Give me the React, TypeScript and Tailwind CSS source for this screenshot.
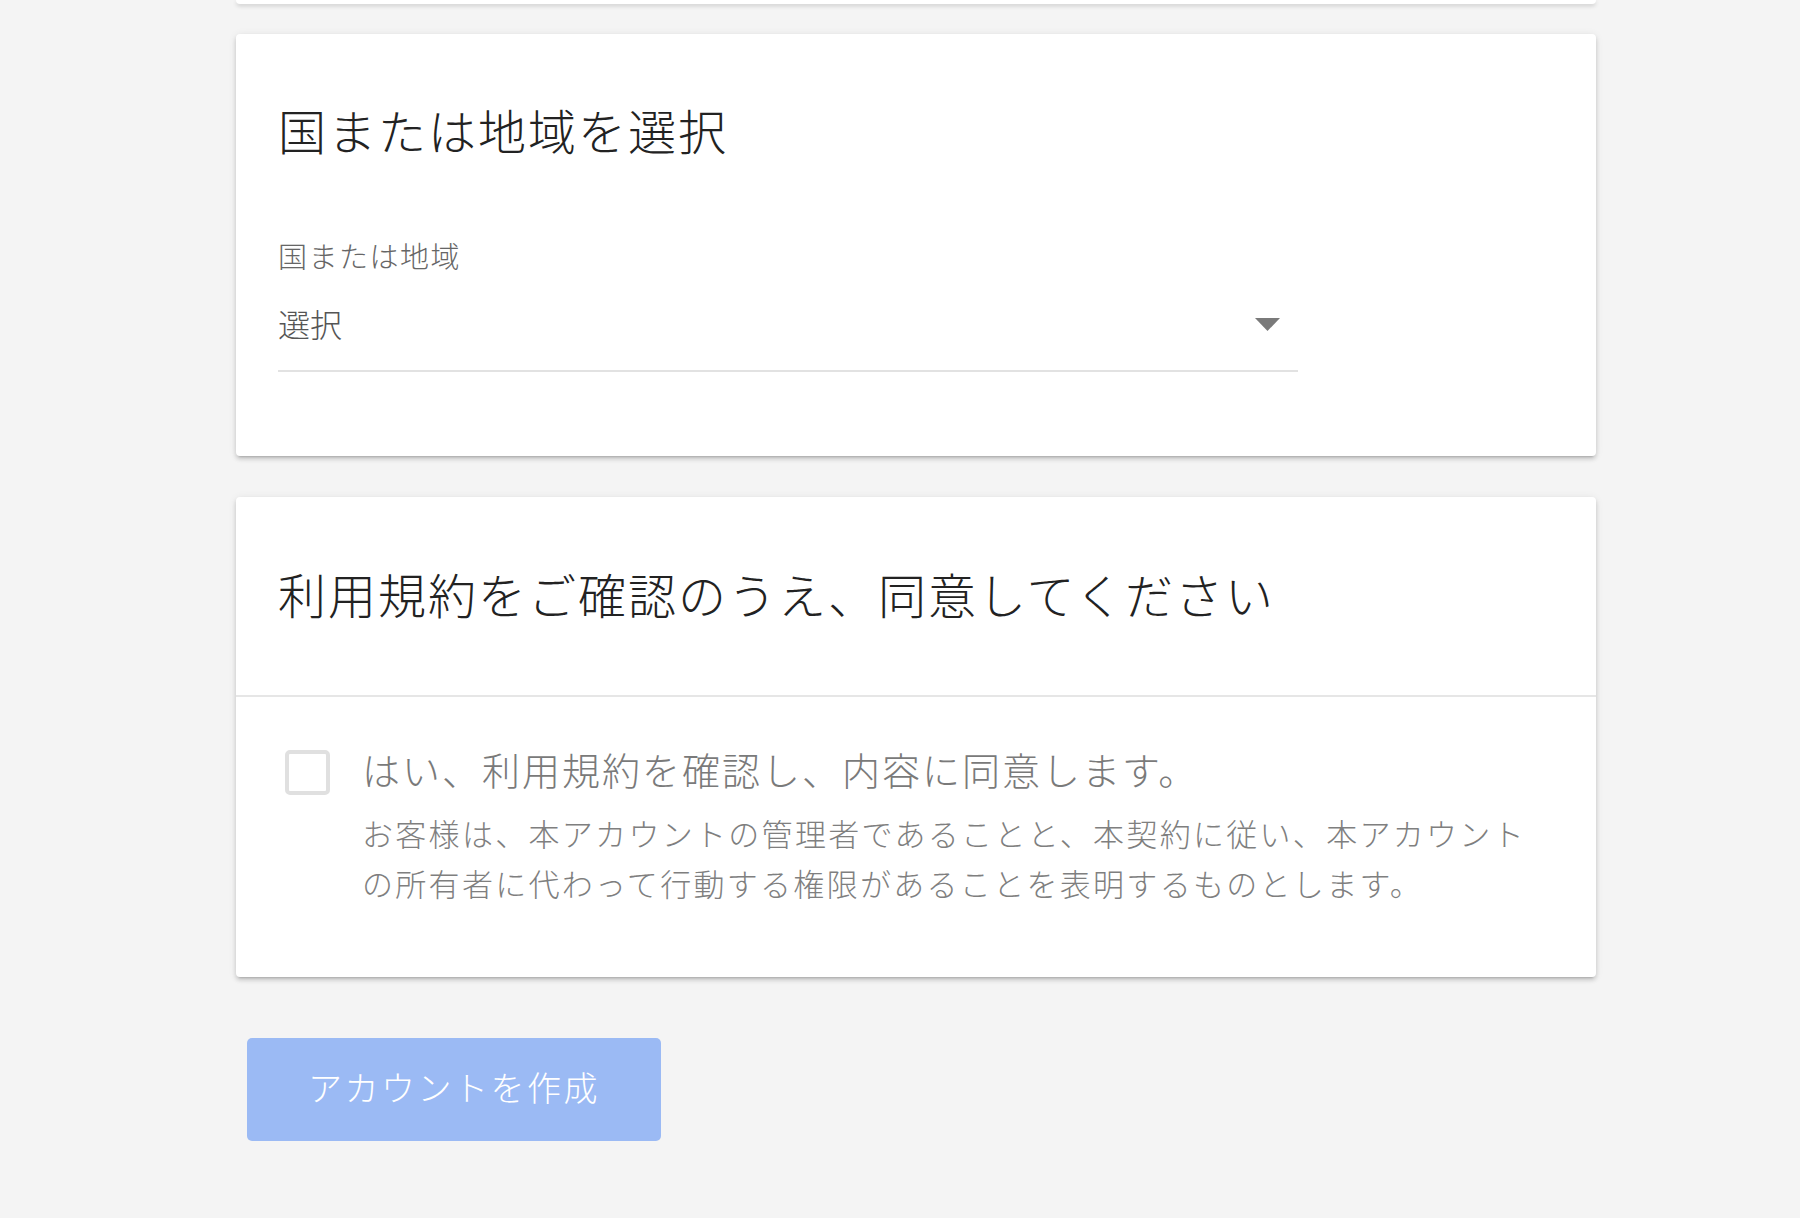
import React, { useState } from 'react';

const jp = { fontFamily: '"Noto Sans CJK JP", "Noto Sans", sans-serif' };

const App = () => {
    const [agreed, setAgreed] = useState(false);

    return (
        <div className="min-h-[1218px] bg-[#f4f4f4]" style={jp}>
            <div className="ml-[236px] w-[1360px]">
                {/* bottom of the previous card */}
                <div className="h-[4px] bg-white rounded-b-[4px] shadow-[0_2px_4px_rgba(0,0,0,0.16),0_3px_2px_-2px_rgba(0,0,0,0.12)]" />

                {/* country card */}
                <div className="mt-[30px] bg-white rounded-[4px] shadow-[0_3px_4px_rgba(0,0,0,0.16),0_4px_2px_-3px_rgba(0,0,0,0.14),0_1px_8px_rgba(0,0,0,0.08)] pl-[42px] pt-[67px] pb-[84px]">
                    <h2 className="h-[56px] leading-[56px] text-[48px] tracking-[2px] text-[#222] font-light">
                        国または地域を選択
                    </h2>
                    <div className="mt-[78px] w-[1020px]">
                        <label className="block h-[40px] leading-[40px] text-[29px] tracking-[1.5px] text-[#666] font-light">
                            国または地域
                        </label>
                        <div className="h-[97px] flex items-center justify-between border-b-2 border-[#e2e2e2] pr-[18px]">
                            <span className="text-[32px] leading-[48px] text-[#555] font-light">選択</span>
                            <svg width="25" height="13" viewBox="0 0 25 13" className="mt-[4px]">
                                <path d="M0 0 H25 L12.5 13 Z" fill="#7a7a7a" />
                            </svg>
                        </div>
                    </div>
                </div>

                {/* terms card */}
                <div className="mt-[41px] bg-white rounded-[4px] shadow-[0_3px_4px_rgba(0,0,0,0.16),0_4px_2px_-3px_rgba(0,0,0,0.14),0_1px_8px_rgba(0,0,0,0.08)]">
                    <div className="pl-[42px] pt-[68px] pb-[74px] border-b-2 border-[#e6e6e6]">
                        <h2 className="h-[56px] leading-[56px] text-[48px] tracking-[2px] text-[#222] font-light">
                            利用規約をご確認のうえ、同意してください
                        </h2>
                    </div>
                    <div className="pl-[49px] pt-[48px] pb-[69px] flex gap-[32px]">
                        <button
                            type="button"
                            onClick={() => setAgreed(!agreed)}
                            className={`mt-[5px] w-[45px] h-[45px] shrink-0 rounded-[5px] border-[4px] ${agreed ? 'border-[#4285f4] bg-[#4285f4]' : 'border-[#e0e0e0] bg-white'}`}
                        />
                        <div className="font-light">
                            <div className="h-[48px] leading-[48px] text-[38px] tracking-[2px] text-[#7a7a7a]">
                                はい、利用規約を確認し、内容に同意します。
                            </div>
                            <p className="mt-[15px] leading-[50px] text-[31px] tracking-[2.3px] text-[#7f7f7f]">
                                お客様は、本アカウントの管理者であることと、本契約に従い、本アカウント
                                <br />
                                の所有者に代わって行動する権限があることを表明するものとします。
                            </p>
                        </div>
                    </div>
                </div>

                <button
                    type="button"
                    disabled={!agreed}
                    className="mt-[61px] ml-[11px] w-[414px] h-[103px] pb-[6px] rounded-[5px] bg-[#9bbaf4] text-white text-[34px] tracking-[2.5px] font-light"
                >
                    アカウントを作成
                </button>
            </div>
        </div>
    );
};

export default App;
